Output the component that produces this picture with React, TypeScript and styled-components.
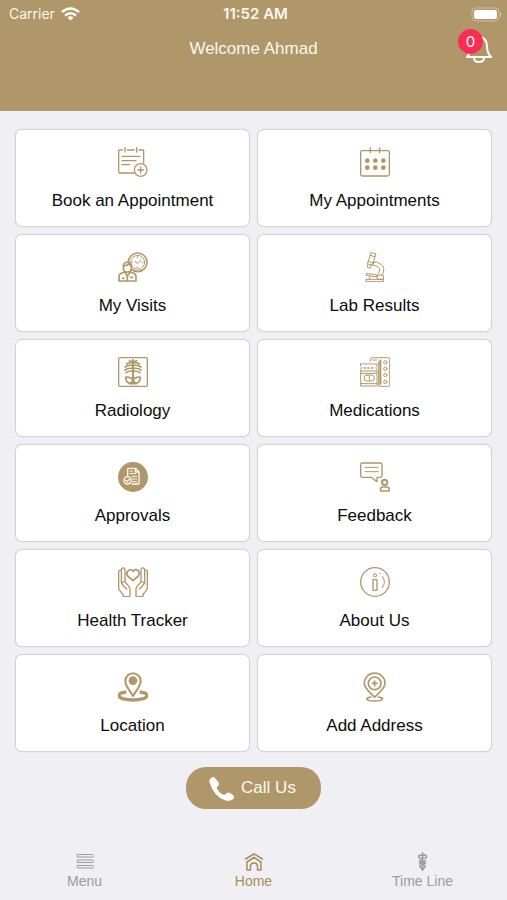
import React from "react";
import styled, { createGlobalStyle } from "styled-components";

const GOLD = "#af976a";

const GlobalStyle = createGlobalStyle`
  * { box-sizing: border-box; }
  body {
    margin: 0;
    background: #efeff4;
    font-family: "Liberation Sans", Arial, Helvetica, sans-serif;
  }
`;

const Screen = styled.div`
  min-height: 100vh;
  display: flex;
  flex-direction: column;
  background: #efeff4;
`;

const Header = styled.header`
  display: flex;
  flex-direction: column;
  padding-bottom: 42px;
  background: ${GOLD};
  color: #fbf7ee;
`;

const StatusBar = styled.div`
  display: grid;
  grid-template-columns: 1fr auto 1fr;
  align-items: center;
  height: 28px;
  padding: 0 5px 0 9px;
  font-family: Inter, sans-serif;
  font-size: 14px;
  line-height: 18px;
`;

const Network = styled.div`
  display: flex;
  align-items: center;
  gap: 6px;
`;

const Clock = styled.time`
  font-size: 15px;
  font-weight: 600;
`;

const BatteryIcon = styled.svg`
  justify-self: end;
`;

const TitleBar = styled.div`
  display: grid;
  grid-template-columns: 1fr auto 1fr;
  align-items: center;
  height: 41px;
  padding: 0 15px;
`;

const Title = styled.h1`
  grid-column: 2;
  margin: 0;
  font-size: 17px;
  font-weight: 400;
  line-height: 20px;
`;

const BellButton = styled.button`
  position: relative;
  justify-self: end;
  width: 26px;
  height: 30px;
  padding: 0;
  border: 0;
  background: none;
  color: #fff;
  cursor: pointer;

  svg { display: block; }
`;

const Badge = styled.span`
  position: absolute;
  top: -5px;
  left: -8px;
  width: 25px;
  height: 25px;
  border-radius: 50%;
  background: #fc2d55;
  color: #fff;
  font-family: Inter, sans-serif;
  font-size: 15px;
  line-height: 25px;
  text-align: center;
`;

const Main = styled.main`
  flex: 1;
  display: flex;
  flex-direction: column;
  align-items: center;
  gap: 15px;
  padding: 18px 15px;
`;

const Grid = styled.nav`
  width: 100%;
  display: grid;
  grid-template-columns: 1fr 1fr;
  gap: 7px;
`;

const Card = styled.button`
  display: flex;
  flex-direction: column;
  align-items: center;
  gap: 12px;
  height: 98px;
  padding: 17px 8px 0;
  border: 1px solid #d2d2d8;
  border-radius: 7px;
  background: #fff;
  box-shadow: 0 0 1px #d2d2d8;
  color: #0c0c0c;
  font-family: inherit;
  font-size: 17px;
  line-height: 24px;
  cursor: pointer;
`;

const CardIcon = styled.svg<{ $weight?: number }>`
  width: 30px;
  height: 30px;
  flex: none;
  fill: none;
  stroke: ${GOLD};
  stroke-width: ${(p) => p.$weight ?? 4};
  stroke-linecap: round;
  stroke-linejoin: round;
`;

const CallButton = styled.a`
  display: flex;
  align-items: center;
  gap: 7px;
  height: 42px;
  padding: 0 25px 0 23px;
  border-radius: 20px;
  background: ${GOLD};
  color: #fdf9f0;
  font-size: 17px;
  line-height: 24px;
  text-decoration: none;
`;

const TabBar = styled.nav`
  display: grid;
  grid-template-columns: repeat(3, 1fr);
  padding-bottom: 10px;
`;

const Tab = styled.a<{ $active?: boolean }>`
  display: flex;
  flex-direction: column;
  align-items: center;
  color: ${(p) => (p.$active ? "#a88d5a" : "#9c9ca0")};
  font-size: 14px;
  line-height: 18px;
  text-decoration: none;
`;

const TabIcon = styled.svg`
  width: 20px;
  height: 20px;
  fill: none;
  stroke: currentColor;
  stroke-linecap: round;
  stroke-linejoin: round;
`;

type IconProps = { weight?: number; children: React.ReactNode };
const Icon = ({ weight, children }: IconProps) => (
  <CardIcon viewBox="0 0 90 90" $weight={weight} aria-hidden="true">
    {children}
  </CardIcon>
);

const BookIcon = () => (
  <Icon weight={4}>
    <path d="M13 9H5q-3 0-3 3v63q0 3 3 3h43M28 9h21M63 9h11q3 0 3 3v36M21 2v13M56 2v13M12 28h54M12 41h42M12 53h23" />
    <circle cx="68" cy="69" r="19" />
    <path d="M68 60v18M59 69h18" />
  </Icon>
);

const CalendarIcon = () => (
  <Icon weight={4}>
    <rect x="2" y="11" width="86" height="76" rx="5" />
    <path d="M31 3v14M59 3v14" />
    <g fill={GOLD} stroke="none">
      {[22, 46, 70].map((x) => (
        <React.Fragment key={x}>
          <circle cx={x} cy="41" r="7" />
          <circle cx={x} cy="62" r="7" />
        </React.Fragment>
      ))}
    </g>
  </Icon>
);

const VisitsIcon = () => (
  <Icon weight={5}>
    <circle cx="59" cy="31" r="28" />
    <circle cx="59" cy="31" r="21" strokeWidth="3" />
    <path d="M50 28l8 6 11-10M58 14v4M58 44v3M41 31h3M72 31h3" strokeWidth="3" />
    <path d="M16 42c-1-14 23-16 24 0v7c0 15-24 15-24 0z" fill="#fff" />
    <path d="M17 40q11 3 15-5 3 6 8 6" />
    <path d="M3 87V74q0-9 9-11l8-3 8 12 9-12 8 3q9 2 9 11v13z" fill="#fff" />
    <path d="M28 72v13M14 79h4M38 76h6" />
  </Icon>
);

const MicroscopeIcon = () => (
  <Icon weight={3}>
    <path d="M34 2l14 4-3 8-14-4zM31 10L22 35l14 5 9-26M25 28l14 5M24 37l-2 9 8 3 3-9" />
    <path d="M43 31q7-4 13 2 18 8 15 24-1 9-7 13M42 40q17 3 17 15 0 6-6 12M42 29l-4 12" />
    <path d="M20 64l30 5-1 6-29-5zM29 75v7M53 69h17v13H53zM19 82h51v7H19z" />
  </Icon>
);

const RadiologyIcon = () => (
  <Icon weight={4}>
    <rect x="2" y="2" width="86" height="86" rx="4" />
    <path d="M45 9v69" strokeWidth="6" />
    <path d="M42 17q-10-1-16 4M48 17q10-1 16 4M42 25q-14-1-21 5M48 25q14-1 21 5M42 34q-14-1-21 5M48 34q14-1 21 5M42 42q-12 0-18 5M48 42q12 0 18 5M34 11l8 3M56 11l-8 3" strokeWidth="5" />
    <path d="M43 66q-8-7-20-5 0 15 12 18 8-3 8-8M47 66q8-7 20-5 0 15-12 18-8-3-8-8M35 80h20" strokeWidth="5" />
  </Icon>
);

const MedicationsIcon = () => (
  <Icon weight={3}>
    <path d="M32 13V7q0-5 5-5h47q5 0 5 5v76q0 5-5 5H56V14M38 9h13" />
    <path d="M61 8v75" strokeWidth="6" strokeLinecap="butt" />
    {[16, 35, 54, 75].map((y) => (
      <circle key={y} cx="76" cy={y} r="5" />
    ))}
    <path d="M2 20q4 3 8 0 4 3 8 0 4 3 8 0 4 3 8 0 4 3 8 0 4 3 9 0v8l-4 4 4 5v5H2v-5l4-5-4-4z" />
    <path d="M11 33h30" strokeWidth="5" strokeDasharray="7 4" strokeLinecap="butt" />
    <path d="M2 44v43h49V44M2 49h49M2 80h49M28 55v15" />
    <rect x="12" y="54" width="31" height="18" rx="9" />
  </Icon>
);

const ApprovalsIcon = () => (
  <Icon weight={4}>
    <circle cx="45" cy="45" r="45" fill={GOLD} stroke="none" />
    <g stroke="#fff9ed">
      <path d="M29 42V21q0-2 2-2h21l11 11v34q0 2-2 2H42M52 20v10h10" />
      <path d="M36 27h8M36 35h17M42 43h14M43 51h13M43 59h13" strokeWidth="3" />
      <circle cx="29" cy="55" r="11" fill={GOLD} />
      <path d="M24 55l4 4 7-8" />
    </g>
  </Icon>
);

const FeedbackIcon = () => (
  <Icon weight={4}>
    <path d="M7 3h54q5 0 5 5v33q0 5-5 5H51v13L34 46H7q-5 0-5-5V8q0-5 5-5z" />
    <path d="M15 16h40M15 29h16M35 29h20" strokeWidth="3" />
    <circle cx="74" cy="61" r="8" strokeWidth="6" />
    <path d="M62 87V79q0-4 5-4h15q5 0 5 4v8z" strokeWidth="5" />
  </Icon>
);

const HAND =
  "M16 89h20V66q0-6-5-10L21 45V9q0-7-7-6-4 1-4 7-8-2-8 5v48q0 7 6 11 8 6 8 15zM10 10v36q0 6 6 10l10 10M21 45q-7-3-8 3";

const HealthIcon = () => (
  <Icon weight={4}>
    <path d="M45 41L29 27c-9-13 9-26 16-14 7-12 25-1 16 14z" strokeWidth="5" />
    <path d={HAND} />
    <path d={HAND} transform="translate(90 0) scale(-1 1)" />
  </Icon>
);

const AboutIcon = () => (
  <Icon weight={4}>
    <circle cx="45" cy="45" r="43" />
    <circle cx="45" cy="25" r="5" strokeWidth="3" />
    <path d="M39 38h12v32H39z" strokeWidth="4" />
    <path d="M67 28q13 17 0 34M58 19l3 2" strokeWidth="3" />
  </Icon>
);

const LocationIcon = () => (
  <Icon weight={6}>
    <path d="M25 60C0 62-4 74 14 80q31 8 62 0c18-6 14-18-11-20" strokeWidth="10" strokeLinecap="butt" />
    <path d="M45 72C37 58 22 43 22 27a23 23 0 0 1 46 0c0 16-15 31-23 45z" fill="#fff" />
    <circle cx="45" cy="26" r="13" fill={GOLD} stroke="none" />
  </Icon>
);

const AddressIcon = () => (
  <Icon weight={5}>
    <path d="M44 76C34 63 13 52 13 34a31 31 0 0 1 62 0c0 18-21 29-31 42z" />
    <circle cx="44" cy="34" r="19" />
    <path d="M44 27v14M37 34h14" />
    <path d="M33 75c-20 3-16 12 11 12s31-9 11-12" />
  </Icon>
);

const CARDS = [
  { label: "Book an Appointment", icon: <BookIcon /> },
  { label: "My Appointments", icon: <CalendarIcon /> },
  { label: "My Visits", icon: <VisitsIcon /> },
  { label: "Lab Results", icon: <MicroscopeIcon /> },
  { label: "Radiology", icon: <RadiologyIcon /> },
  { label: "Medications", icon: <MedicationsIcon /> },
  { label: "Approvals", icon: <ApprovalsIcon /> },
  { label: "Feedback", icon: <FeedbackIcon /> },
  { label: "Health Tracker", icon: <HealthIcon /> },
  { label: "About Us", icon: <AboutIcon /> },
  { label: "Location", icon: <LocationIcon /> },
  { label: "Add Address", icon: <AddressIcon /> },
];

export default function App() {
  return (
    <Screen>
      <GlobalStyle />
      <Header>
        <StatusBar>
          <Network>
            <span>Carrier</span>
            <svg width="19" height="14" viewBox="0 0 38 28" fill="none" stroke="#fff" strokeWidth="5" aria-hidden="true">
              <path d="M2 10q17-14 34 0M8 17q11-9 22 0" />
              <path d="M19 27l-6-6q6-5 12 0z" fill="#fff" stroke="none" />
            </svg>
          </Network>
          <Clock>11:52 AM</Clock>
          <BatteryIcon width="31" height="15" viewBox="0 0 31 15" aria-hidden="true">
            <rect x="1" y="1" width="27" height="13" rx="4" fill="none" stroke="#cdbf9f" strokeWidth="1" />
            <rect x="3" y="3" width="23" height="9" rx="2" fill="#fff" />
            <path d="M29 5q3 2 0 5z" fill="#cdbf9f" />
          </BatteryIcon>
        </StatusBar>
        <TitleBar>
          <Title>Welcome Ahmad</Title>
          <BellButton aria-label="Notifications">
            <svg width="26" height="30" viewBox="0 0 26 30" fill="none" stroke="#fff" strokeWidth="2" strokeLinejoin="round" aria-hidden="true">
              <path d="M1 23Q5 19 5 12C5 7 8 3 13 3s8 4 8 9q0 7 4 11zM8 24q0 4 5 4t5-4" />
            </svg>
            <Badge>0</Badge>
          </BellButton>
        </TitleBar>
      </Header>

      <Main>
        <Grid aria-label="Services">
          {CARDS.map(({ label, icon }) => (
            <Card key={label} type="button">
              {icon}
              <span>{label}</span>
            </Card>
          ))}
        </Grid>
        <CallButton href="tel:">
          <svg width="25" height="25" viewBox="0 0 50 50" fill="#fff" aria-hidden="true">
            <path d="M1 13Q0 7 4 4 9 0 12 4l7 9q3 4-2 8-3 2 0 6 4 7 11 10 3 2 5-1 4-5 9-2l7 5q3 4-2 8-6 4-14 2Q10 42 1 13z" />
          </svg>
          <span>Call Us</span>
        </CallButton>
      </Main>

      <TabBar aria-label="Main">
        <Tab href="#menu">
          <TabIcon viewBox="0 0 40 40" strokeWidth="2" stroke="#b0b0b4" aria-hidden="true">
            <rect x="4" y="5" width="33" height="5" rx="2" />
            <rect x="4" y="16" width="33" height="5" rx="2" />
            <rect x="4" y="27" width="33" height="5" rx="2" />
          </TabIcon>
          Menu
        </Tab>
        <Tab href="#home" $active aria-current="page">
          <TabIcon viewBox="0 0 40 40" strokeWidth="3" aria-hidden="true">
            <path d="M3 14L20 4l17 10M6 36V20l14-9 14 9v16h-7v-8q0-6-7-6t-7 6v8z" />
          </TabIcon>
          Home
        </Tab>
        <Tab href="#timeline">
          <TabIcon viewBox="0 0 40 40" strokeWidth="3" stroke="#77777b" aria-hidden="true">
            <path d="M19 1v36M19 7Q9 5 12 10t7 3q10-1 8-5t-8-1M13 17l12 5-12 5M25 17l-12 5 11 5M14 29l5 7 5-7" />
          </TabIcon>
          Time Line
        </Tab>
      </TabBar>
    </Screen>
  );
}
